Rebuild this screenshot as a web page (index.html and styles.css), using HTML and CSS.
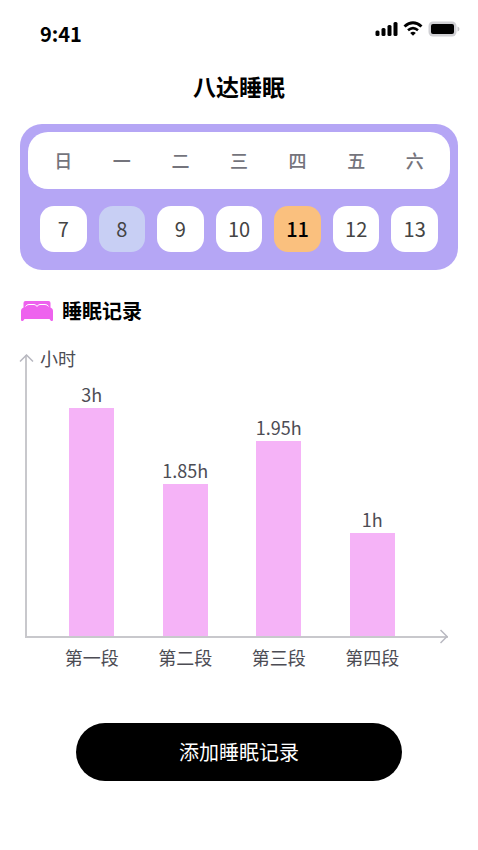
FILE: index.html
```
<!DOCTYPE html>
<html lang="zh-CN">
<head>
  <meta charset="UTF-8">
  <meta name="viewport" content="width=device-width, initial-scale=1.0">
  <title>八达睡眠</title>
  <link rel="stylesheet" href="styles.css">
</head>
<body>
  <div class="status-bar">
    <span class="time">9:41</span>
    <div class="status-icons">
      <svg width="23" height="16" viewBox="0 0 23 16">
        <rect x="0.500" y="9.500" width="4" height="5.500" rx="1.500" />
        <rect x="6.500" y="7" width="4" height="8" rx="1.500" />
        <rect x="12.500" y="4" width="4" height="11" rx="1.500" />
        <rect x="18.500" y="1" width="4" height="14" rx="1.500" />
      </svg>
      <svg width="20" height="16" viewBox="0 0 20 16">
        <path d="M1.500 5.500Q10 -2 18.500 5.500" fill="none" stroke="#000" stroke-width="3" />
        <path d="M5 9.300Q10 5 15 9.300" fill="none" stroke="#000" stroke-width="2.600" />
        <path d="M7.200 11.900Q10 9.600 12.800 11.900L10 14.800Z" />
      </svg>
      <svg width="32" height="16" viewBox="0 0 32 16">
        <rect x="0.500" y="0.500" width="28" height="15" rx="4.500" fill="#d0d0d4" />
        <path d="M29.500 5.500Q31.500 6 31.500 8T29.500 10.500Z" fill="#c4c4c8" />
        <rect x="3" y="3" width="23" height="10" rx="2" />
      </svg>
    </div>
  </div>

  <h1 class="title">八达睡眠</h1>

  <main>
    <section class="calendar">
      <div class="week">
        <span>日</span>
        <span>一</span>
        <span>二</span>
        <span>三</span>
        <span>四</span>
        <span>五</span>
        <span>六</span>
      </div>
      <div class="days">
        <button type="button" class="day">7</button>
        <button type="button" class="day marked">8</button>
        <button type="button" class="day">9</button>
        <button type="button" class="day">10</button>
        <button type="button" class="day today">11</button>
        <button type="button" class="day">12</button>
        <button type="button" class="day">13</button>
      </div>
    </section>

    <h2 class="section-title">
      <svg width="34" height="22" viewBox="0 0 34 22">
        <path d="M3.500 8V3Q3.500 1 5.500 1H28.500Q30.500 1 30.500 3V8Z" fill="#ee62ee" />
        <path d="M5.500 6.500Q6.500 4.500 9 4.500H14Q16 4.500 17 6.500Q18 4.500 20 4.500H25Q27.500 4.500 28.500 6.500" fill="none" stroke="#fff" stroke-width="1" />
        <path d="M1 11Q1 8 4 7.500H30Q33 8 33 11V20Q33 21 32 21H31L29.500 19H4.500L3 21H2Q1 21 1 20Z" fill="#ee62ee" />
      </svg>
      睡眠记录
    </h2>

    <section class="chart">
      <div class="plot">
        <svg class="arrow arrow-up" width="15" height="8" viewBox="0 0 15 8">
          <path d="M1 7.500L7.500 1L14 7.500" />
        </svg>
        <svg class="arrow arrow-right" width="8" height="15" viewBox="0 0 8 15">
          <path d="M0.500 1L7 7.500L0.500 14" />
        </svg>
        <div class="unit">小时</div>
        <div class="bars">
          <div class="column"><span>3h</span><div class="bar" style="height: 228px"></div></div>
          <div class="column"><span>1.85h</span><div class="bar" style="height: 152px"></div></div>
          <div class="column"><span>1.95h</span><div class="bar" style="height: 195px"></div></div>
          <div class="column"><span>1h</span><div class="bar" style="height: 103px"></div></div>
        </div>
      </div>
      <div class="labels">
        <span>第一段</span>
        <span>第二段</span>
        <span>第三段</span>
        <span>第四段</span>
      </div>
    </section>

    <button type="button" class="add-button">添加睡眠记录</button>
  </main>
</body>
</html>
```

FILE: styles.css
```
* {
  box-sizing: border-box;
}

body {
  margin: 0;
  padding: 20px 0 40px;
  background-color: #fff;
  color: #000;
  font-family: "Noto Sans CJK SC", sans-serif;
}

main {
  padding: 0 20px;
}

svg {
  display: block;
}

.status-bar {
  display: flex;
  justify-content: space-between;
  height: 28px;
  padding: 0 18px 0 40px;
}

.time {
  font-size: 20px;
  font-weight: bold;
  line-height: 28px;
}

.status-icons {
  display: flex;
  gap: 5px;
  padding-top: 1px;
}

.title {
  margin: 22px 0;
  font-size: 23px;
  font-weight: bold;
  line-height: 32px;
  text-align: center;
}

/* week calendar */
.calendar {
  padding: 8px 8px 18px;
  border-radius: 22px;
  background-color: #b5a6f5;
}

.week,
.days {
  display: grid;
  grid-template-columns: repeat(7, 1fr);
  gap: 12px;
  padding: 0 12px;
}

.week {
  border-radius: 20px;
  background-color: #fff;
  color: #74747c;
  font-size: 18px;
  font-weight: 500;
  line-height: 57px;
  text-align: center;
}

.days {
  margin-top: 17px;
}

.day {
  height: 46px;
  padding: 0 0 2px;
  border: none;
  border-radius: 14px;
  background-color: #fff;
  color: #444;
  font-family: inherit;
  font-size: 20px;
  cursor: pointer;
}

.marked {
  background-color: #c8cff4;
}

.today {
  background-color: #fac07e;
  color: #000;
  font-weight: 500;
}

.section-title {
  display: flex;
  align-items: center;
  gap: 8px;
  margin: 26px 0 20px;
  font-size: 20px;
  font-weight: bold;
  line-height: 30px;
}

/* bar chart */
.chart {
  margin: 0 10px 0 5px;
  color: #4c4c54;
  font-size: 18px;
  line-height: 24px;
}

.plot {
  position: relative;
  border-bottom: 2px solid #c8c8cc;
}

.plot::before {
  content: "";
  position: absolute;
  top: 9px;
  bottom: 0;
  left: 0;
  width: 2px;
  background-color: #c8c8cc;
}

.arrow {
  position: absolute;
  fill: none;
  stroke: #b8b8c0;
  stroke-width: 1.5;
}

.arrow-up {
  top: 8px;
  left: -6px;
}

.arrow-right {
  right: 0;
  bottom: -8px;
}

.unit {
  padding-left: 15px;
}

.bars,
.labels {
  display: grid;
  grid-template-columns: repeat(4, 1fr);
  padding: 0 29px 0 20px;
  text-align: center;
}

.bars {
  height: 266px;
  align-items: end;
}

.bar {
  width: 45px;
  margin: 2px auto 0;
  background-color: #f5b3f7;
}

.labels {
  padding-top: 7px;
}

.add-button {
  display: block;
  width: calc(100% - 112px);
  height: 58px;
  margin: 54px auto 0;
  padding: 0 0 2px;
  border: none;
  border-radius: 29px;
  background-color: #000;
  color: #fff;
  font-family: inherit;
  font-size: 20px;
  cursor: pointer;
}
```
